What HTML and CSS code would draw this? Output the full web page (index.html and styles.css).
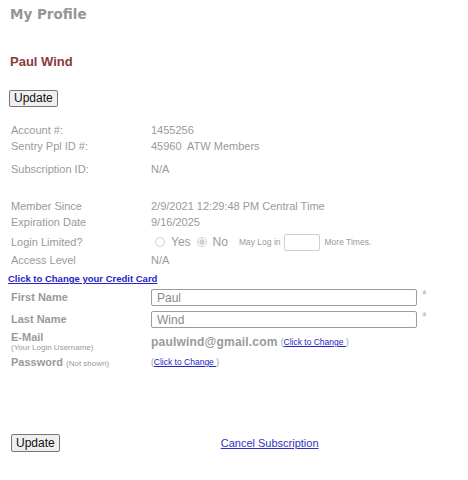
FILE: index.html
```html
<!DOCTYPE html>
<html lang="en">
  <head>
    <meta charset="UTF-8" />
    <meta name="viewport" content="width=device-width, initial-scale=1.0" />
    <title>My Profile</title>
    <link rel="stylesheet" href="styles.css">
  </head>
  <body>
    <h1 class="page-title">My Profile</h1>
    <h2 class="member-name">Paul Wind</h2>

    <button type="button" class="btn btn-top">Update</button>

    <div class="details">
      <div class="row">
        <span class="label">Account #:</span>
        <span class="value">1455256</span>
      </div>
      <div class="row">
        <span class="label">Sentry Ppl ID #:</span>
        <span class="value">45960&nbsp; ATW Members</span>
      </div>
      <div class="row row-sub">
        <span class="label">Subscription ID:</span>
        <span class="value">N/A</span>
      </div>
      <div class="row row-member">
        <span class="label">Member Since</span>
        <span class="value">2/9/2021 12:29:48 PM Central Time</span>
      </div>
      <div class="row">
        <span class="label">Expiration Date</span>
        <span class="value">9/16/2025</span>
      </div>
      <div class="row row-login">
        <span class="label">Login Limited?</span>
        <span class="value login-opts">
          <span class="radio"></span><span class="opt">Yes</span>
          <span class="radio checked"></span><span class="opt">No</span>
          <span class="small">May Log in</span>
          <span class="times-box"></span>
          <span class="small">More Times.</span>
        </span>
      </div>
      <div class="row row-access">
        <span class="label">Access Level</span>
        <span class="value">N/A</span>
      </div>
    </div>

    <a href="#" class="card-link">Click to Change your Credit Card</a>

    <form class="edit-form">
      <div class="row field">
        <label class="label bold">First Name</label>
        <input type="text" class="text-input" value="Paul" />
        <span class="req">*</span>
      </div>
      <div class="row field field-last">
        <label class="label bold">Last Name</label>
        <input type="text" class="text-input" value="Wind" />
        <span class="req">*</span>
      </div>
      <div class="row row-email">
        <div class="label">
          <div class="bold">E-Mail</div>
          <div class="hint">(Your Login Username)</div>
        </div>
        <span class="email">paulwind@gmail.com</span>
        <span class="small-link">(<a href="#">Click to Change </a>)</span>
      </div>
      <div class="row row-pass">
        <span class="label"><span class="bold">Password</span> <span class="hint">(Not shown)</span></span>
        <span class="small-link">(<a href="#">Click to Change </a>)</span>
      </div>
    </form>

    <div class="actions">
      <button type="button" class="btn btn-bottom">Update</button>
      <a href="#" class="cancel-link">Cancel Subscription</a>
    </div>
  </body>
</html>
```

FILE: styles.css
```css
body {
  margin: 0;
  padding: 0 11px;
  font-family: "Liberation Sans", Arial, sans-serif;
  font-size: 11px;
  color: #9a9a9a;
}

a {
  color: #2525c8;
}

.page-title {
  margin: 5px 0 0 -1px;
  font-family: "DejaVu Sans", Verdana, sans-serif;
  font-size: 13.5px;
  line-height: 18px;
  font-weight: bold;
  color: #959595;
}

.member-name {
  margin: 31px 0 0 -1px;
  font-size: 13px;
  line-height: 16px;
  font-weight: bold;
  color: #8b3a3a;
}

.btn {
  display: block;
  font-family: "Liberation Sans", Arial, sans-serif;
  font-size: 12px;
  line-height: 13px;
  padding: 1px 4px;
  color: #111;
  background: #efefef;
  border: 1px solid #767676;
  border-radius: 2px;
}

.btn-top {
  margin: 20px 0 0 -2px;
}

.details {
  margin-top: 15px;
}

.row {
  display: flex;
  align-items: center;
  height: 16px;
}

.label {
  flex: 0 0 140px;
}

.row-sub {
  margin-top: 7px;
}

.row-member {
  margin-top: 21px;
}

.row-login {
  height: 18px;
  margin-top: 3px;
}

.row-access {
  margin-top: 1px;
}

.login-opts {
  display: flex;
  align-items: center;
  margin-left: 4px;
}

.radio {
  width: 10px;
  height: 10px;
  border: 1px solid #d0d0d0;
  border-radius: 50%;
  box-sizing: border-box;
  margin-right: 6px;
}

.radio.checked {
  background: radial-gradient(circle, #cfcfcf 0 2.5px, #fff 3px);
}

.opt {
  font-size: 12px;
  margin-right: 6px;
}

.small {
  font-size: 8.5px;
  margin: 0 3px 0 5px;
}

.times-box {
  width: 36px;
  height: 17px;
  border: 1px solid #cfcfcf;
  border-radius: 2px;
  box-sizing: border-box;
}

.card-link {
  display: block;
  margin: 5px 0 0 -3px;
  font-size: 9.5px;
  line-height: 12px;
  font-weight: bold;
}

.edit-form {
  margin: 0;
}

.field {
  height: 17px;
  margin-top: 4px;
  align-items: flex-start;
}

.field .label {
  line-height: 17px;
}

.field-last {
  margin-top: 5px;
}

.bold {
  font-weight: bold;
  font-size: 11px;
}

.text-input {
  width: 266px;
  height: 17px;
  box-sizing: border-box;
  padding: 0 5px;
  font-family: "Liberation Sans", Arial, sans-serif;
  font-size: 12px;
  color: #8a8a8a;
  border: 1px solid #9c9c9c;
  border-radius: 2px;
}

.req {
  margin-left: 5px;
  font-size: 12px;
  line-height: 12px;
  color: #b0b0b0;
}

.row-email {
  height: auto;
  margin-top: 3px;
}

.row-email .bold {
  line-height: 12px;
}

.hint {
  font-size: 8px;
  line-height: 10px;
}

.email {
  font-size: 12px;
  font-weight: bold;
  letter-spacing: 0.2px;
  margin-right: 3px;
}

.small-link {
  font-size: 8.5px;
}

.row-pass {
  height: 14px;
  margin-top: 2px;
}

.actions {
  display: flex;
  align-items: center;
  margin-top: 65px;
}

.btn-bottom {
  margin-left: 0;
  height: 18px;
}

.cancel-link {
  margin-left: 161px;
  font-size: 11px;
  color: #3030c8;
}
```
